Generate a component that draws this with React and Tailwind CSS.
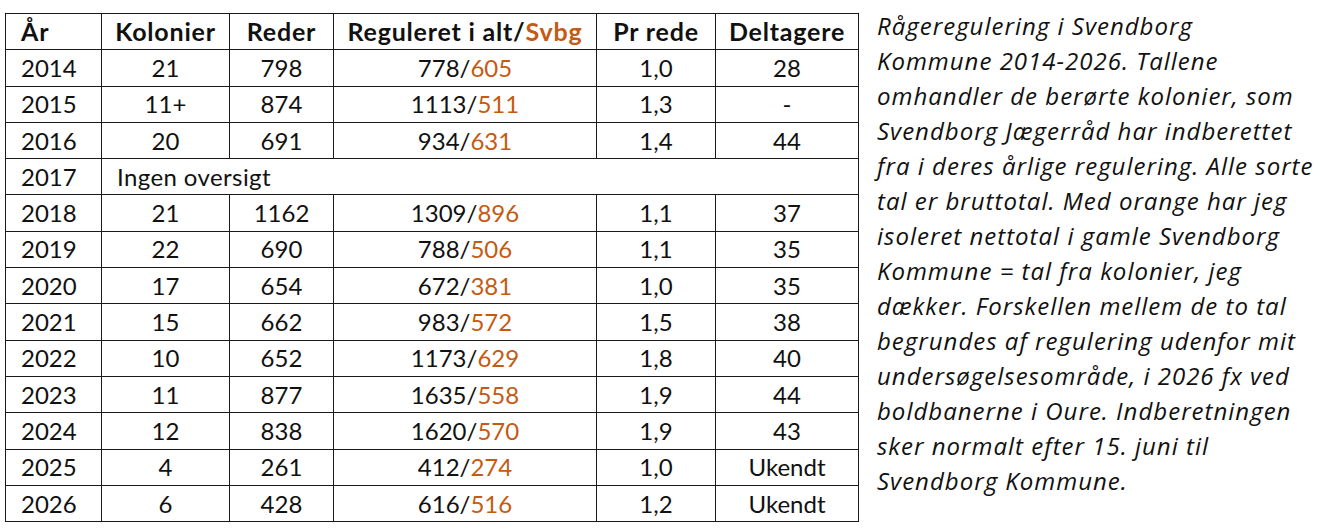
import React from "react";

const rows = [
  ["2014", "21", "798", "778", "605", "1,0", "28"],
  ["2015", "11+", "874", "1113", "511", "1,3", "-"],
  ["2016", "20", "691", "934", "631", "1,4", "44"],
  null,
  ["2018", "21", "1162", "1309", "896", "1,1", "37"],
  ["2019", "22", "690", "788", "506", "1,1", "35"],
  ["2020", "17", "654", "672", "381", "1,0", "35"],
  ["2021", "15", "662", "983", "572", "1,5", "38"],
  ["2022", "10", "652", "1173", "629", "1,8", "40"],
  ["2023", "11", "877", "1635", "558", "1,9", "44"],
  ["2024", "12", "838", "1620", "570", "1,9", "43"],
  ["2025", "4", "261", "412", "274", "1,0", "Ukendt"],
  ["2026", "6", "428", "616", "516", "1,2", "Ukendt"],
];

const lines = [
  "Rågeregulering i Svendborg",
  "Kommune 2014-2026. Tallene",
  "omhandler de berørte kolonier, som",
  "Svendborg Jægerråd har indberettet",
  "fra i deres årlige regulering. Alle sorte",
  "tal er bruttotal. Med orange har jeg",
  "isoleret nettotal i gamle Svendborg",
  "Kommune = tal fra kolonier, jeg",
  "dækker. Forskellen mellem de to tal",
  "begrundes af regulering udenfor mit",
  "undersøgelsesområde, i 2026 fx ved",
  "boldbanerne i Oure. Indberetningen",
  "sker normalt efter 15. juni til",
  "Svendborg Kommune.",
];

const td = "border border-[#1a1a1a] p-0 text-center";
const th = "border border-[#1a1a1a] p-0 text-center text-[25px] tracking-[0.8px]";

export default function App() {
  return (
    <div className="w-[1323px] h-[532px] bg-white flex items-start text-[#111]" style={{ fontFamily: "Lato, 'Noto Sans', sans-serif" }}>
      <div className="pt-[13px] pl-[5px]">
        <table className="border-collapse text-[24px] leading-none">
          <colgroup>
            <col className="w-[96px]" />
            <col className="w-[128px]" />
            <col className="w-[104px]" />
            <col className="w-[263px]" />
            <col className="w-[119px]" />
            <col className="w-[143px]" />
          </colgroup>
          <thead>
            <tr className="h-[36.3px] font-bold">
              <td className="border border-[#1a1a1a] p-0 pl-[15px] text-left text-[25px] tracking-[0.8px]">År</td>
              <td className={th}>Kolonier</td>
              <td className={th}>Reder</td>
              <td className={th}>
                Reguleret i alt/<span className="text-[#c55a11]">Svbg</span>
              </td>
              <td className={th}>Pr rede</td>
              <td className={th}>Deltagere</td>
            </tr>
          </thead>
          <tbody>
            {rows.map((r, i) =>
              r === null ? (
                <tr key={i} className="h-[36.3px]">
                  <td className="border border-[#1a1a1a] p-0 pl-[15px] text-left">2017</td>
                  <td colSpan={5} className="border border-[#1a1a1a] p-0 pl-[15px] text-left tracking-[0.4px]">
                    Ingen oversigt
                  </td>
                </tr>
              ) : (
                <tr key={i} className="h-[36.3px]">
                  <td className="border border-[#1a1a1a] p-0 pl-[15px] text-left">{r[0]}</td>
                  <td className={td}>{r[1]}</td>
                  <td className={td}>{r[2]}</td>
                  <td className={td}>
                    {r[3]}/<span className="text-[#c55a11]">{r[4]}</span>
                  </td>
                  <td className={td}>{r[5]}</td>
                  <td className={td}>{r[6]}</td>
                </tr>
              )
            )}
          </tbody>
        </table>
      </div>
      <div
        className="pl-[18px] pt-[8px] italic text-[24px] leading-[35px] tracking-[1px]"
        style={{ fontFamily: "'Open Sans', Lato, sans-serif" }}
      >
        {lines.map((l, i) => (
          <div key={i} className="whitespace-nowrap">{l}</div>
        ))}
      </div>
    </div>
  );
}
